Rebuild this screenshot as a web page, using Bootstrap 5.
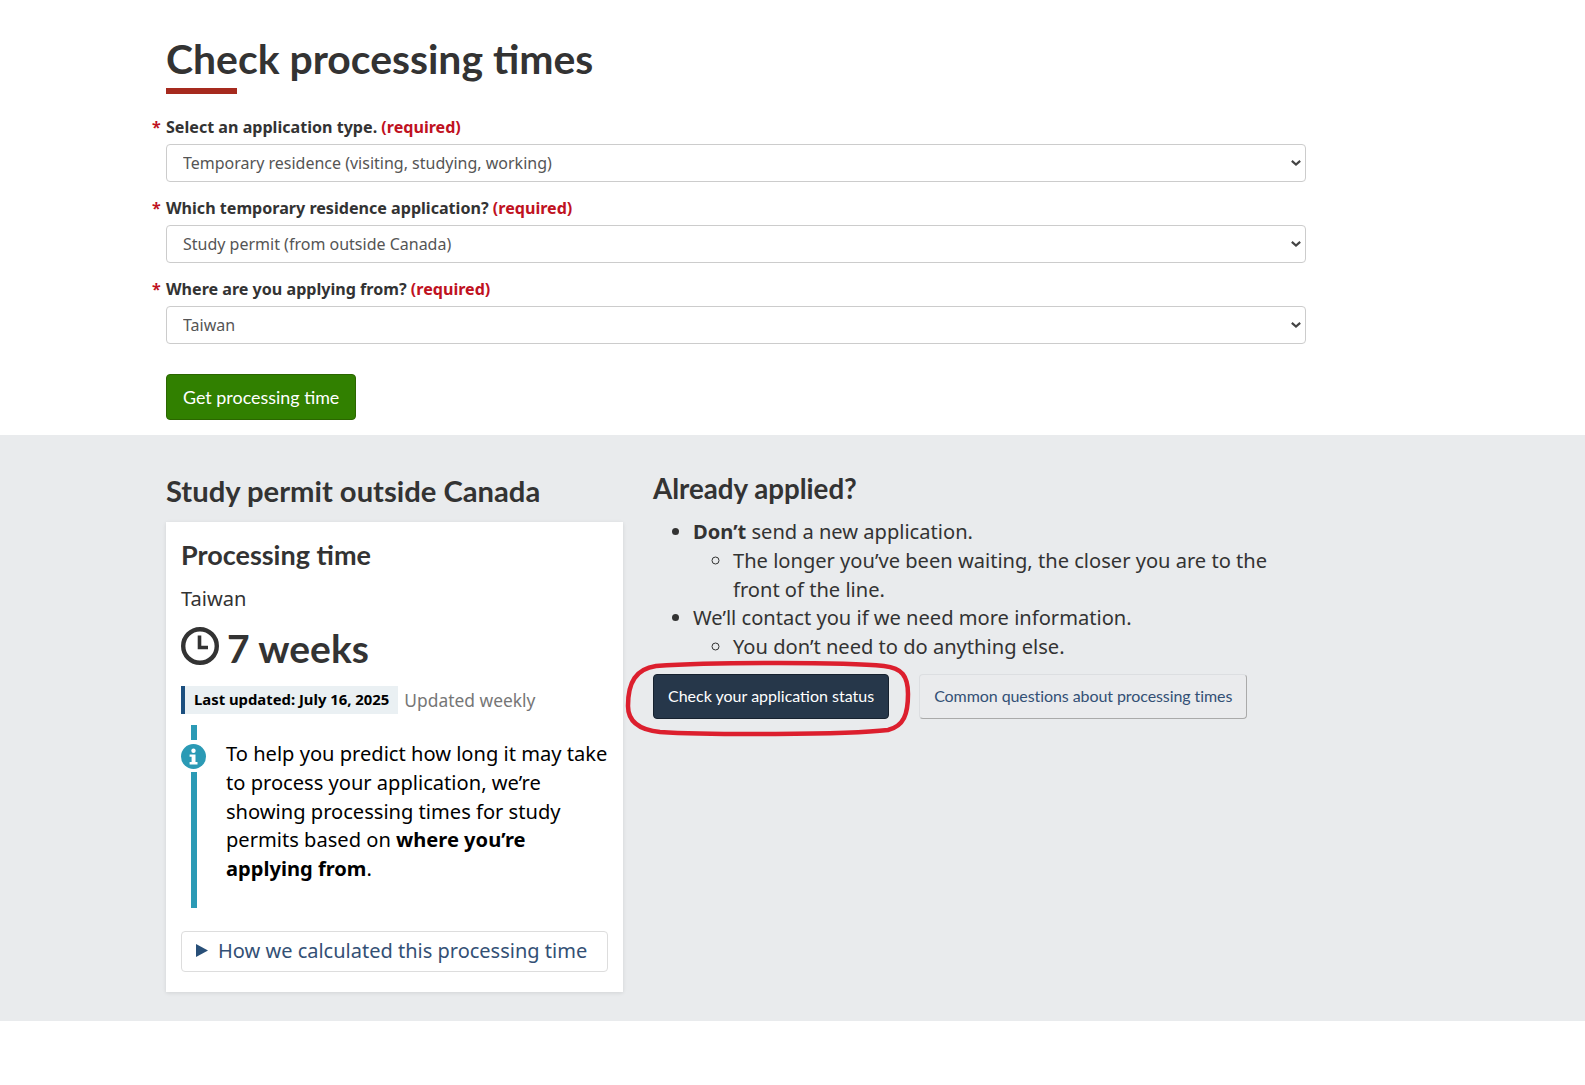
<!doctype html>
<html lang="en">
<head>
<meta charset="utf-8">
<title>Check processing times</title>
<link rel="stylesheet" href="https://cdn.jsdelivr.net/npm/bootstrap@5.3.0/dist/css/bootstrap.min.css">
<style>
body{font-family:"Noto Sans",sans-serif;font-size:20.1px;line-height:28.75px;color:#333;background:#fff;min-height:1085px}
.page-wrap{padding-left:166px;width:1140px;box-sizing:content-box}
.top-area{padding-top:34px;height:435px}
.main-title{font-family:Lato,sans-serif;font-weight:700;font-size:40.9px;line-height:50px;color:#333;margin:0;height:59px;position:relative}
.main-title::after{content:"";position:absolute;left:0;bottom:-1px;width:71px;height:6px;background:#a62a1e}
.q-block{margin-bottom:0;height:81px}
.q-label{display:block;position:relative;font-size:16.1px;font-weight:700;line-height:22px;color:#333;margin:0 0 6px}
.q-label::before{content:"*";position:absolute;left:-14px;color:#c0121f}
.req{color:#c0121f}
.q-select{height:38px;font-family:"Noto Sans",sans-serif;font-size:16px;line-height:22px;color:#555;padding:6px 30px 6px 16px;border:1px solid #ccc;border-radius:4px;background-image:url("data:image/svg+xml,%3csvg xmlns='http://www.w3.org/2000/svg' viewBox='0 0 12 8'%3e%3cpath fill='none' stroke='%23444' stroke-width='2.6' d='M1 1.5l5 4.5 5-4.5'/%3e%3c/svg%3e");background-size:10px 8px;background-position:right 4px center}
.first-q{margin-top:23px}
.go-btn{font-family:Lato,sans-serif;font-size:17.9px;line-height:24px;color:#fff;background:#318000;border:1px solid #2b6600;border-radius:4px;padding:10px 16px;height:46px;margin-top:15px}
.go-btn:hover{color:#fff;background:#318000}
.grey-band{background:#e9ebed;height:586px;padding-top:35px}
.cols{display:flex;gap:30px}
.left-col{width:457px;flex:none}
.right-col{flex:1;min-width:0;padding-top:1px}
.sub-head{font-family:Lato,sans-serif;font-weight:700;font-size:29.2px;line-height:36px;color:#333;margin:0}
.left-head{margin:3px 0 13px}
.time-card{background:#fff;height:470px;padding:15px;box-shadow:0 1px 4px rgba(0,0,0,.1)}
.time-head{font-family:Lato,sans-serif;font-weight:700;font-size:27px;line-height:34px;margin:1px 0 12px;color:#333}
.place{line-height:29px;margin-bottom:13px}
.time-row{display:flex;align-items:center;gap:8px;height:44px;font-family:Lato,sans-serif;font-weight:700;font-size:39px;line-height:44px;color:#333}
.time-row svg{width:38px;height:38px;flex:none;margin-top:-4px}
.update-row{display:flex;align-items:center;gap:6px;margin-top:16px;height:28px}
.update-tag{background:#eaf0f3;border-left:4px solid #1c4f7f;font-size:14.85px;font-weight:700;color:#000;height:28px;line-height:27px;padding:0 9px 0 9px;white-space:nowrap}
.update-note{font-size:17.4px;color:#767676;line-height:26px}
.info-box{display:flex;gap:20px;margin-top:11px;height:183px}
.info-rail{width:25px;flex:none;display:flex;flex-direction:column;align-items:center}
.rail-top{width:6px;height:15px;background:#2b9ab5;margin-left:1px}
.rail-bottom{width:6px;flex:1;background:#2b9ab5;margin-left:1px}
.info-rail svg{width:25px;height:25px;margin:4px 0 3px;flex:none}
.info-text{color:#000;margin:15px 0 0;width:385px}
.calc-box{margin-top:23px;height:41px;border:1px solid #ddd;border-radius:4px;padding:0 14px 2px;color:#335075;font-size:20px;line-height:37px;white-space:nowrap;display:flex;align-items:center;gap:10px}
.calc-box svg{width:12px;height:13px;flex:none}
.right-col .sub-head{font-size:27.7px;line-height:36px;margin-bottom:11px}
.app-list{margin:0;padding-left:40px;list-style:disc}
.app-list ul{margin:0;padding-left:40px;list-style:circle}
.btn-row{display:flex;gap:30px;margin-top:12px;align-items:center}
.ring-wrap{position:relative}
.ring-wrap svg{position:absolute;left:-27px;top:-12px;width:284px;height:74px;pointer-events:none;overflow:visible}
.status-btn{font-family:Lato,sans-serif;font-size:16px;line-height:22px;color:#fff;background:#26374a;border:1px solid #16212e;border-radius:4px;height:45px;padding:10px 14px;white-space:nowrap;display:block}
.status-btn:hover{color:#fff;background:#26374a}
.faq-btn{font-family:Lato,sans-serif;font-size:16px;line-height:22px;color:#335075;background:#eaebed;border:1px solid #dcdee1;border-bottom-color:#aaa;border-right-color:#aaa;border-radius:4px;height:45px;padding:10px 14px;letter-spacing:-.08px;white-space:nowrap}
.faq-btn:hover{color:#335075;background:#eaebed}
</style>
</head>
<body>
<div class="top-area">
  <div class="page-wrap">
    <h1 class="main-title">Check processing times</h1>
    <form>
      <div class="q-block first-q">
        <label class="q-label" for="q1">Select an application type. <span class="req">(required)</span></label>
        <select class="form-select q-select" id="q1"><option>Temporary residence (visiting, studying, working)</option></select>
      </div>
      <div class="q-block">
        <label class="q-label" for="q2">Which temporary residence application? <span class="req">(required)</span></label>
        <select class="form-select q-select" id="q2"><option>Study permit (from outside Canada)</option></select>
      </div>
      <div class="q-block">
        <label class="q-label" for="q3">Where are you applying from? <span class="req">(required)</span></label>
        <select class="form-select q-select" id="q3"><option>Taiwan</option></select>
      </div>
      <button type="button" class="btn go-btn">Get processing time</button>
    </form>
  </div>
</div>
<div class="grey-band">
  <div class="page-wrap">
    <div class="cols">
      <div class="left-col">
        <h2 class="sub-head left-head">Study permit outside Canada</h2>
        <div class="time-card">
          <h3 class="time-head">Processing time</h3>
          <div class="place">Taiwan</div>
          <div class="time-row">
            <svg viewBox="0 0 38 38" fill="none" stroke="#333" aria-hidden="true"><circle cx="19" cy="19" r="16.8" stroke-width="4.4"/><path d="M18.5 8.5V20.5H27" stroke-width="3.6"/></svg>
            <span>7 weeks</span>
          </div>
          <div class="update-row">
            <span class="update-tag">Last updated: July 16, 2025</span>
            <span class="update-note">Updated weekly</span>
          </div>
          <div class="info-box">
            <div class="info-rail">
              <div class="rail-top"></div>
              <svg viewBox="0 0 25 25" aria-hidden="true"><circle cx="12.5" cy="12.5" r="12.5" fill="#2b9ab5"/><circle cx="12.5" cy="6.8" r="2.2" fill="#fff"/><path d="M8.6 10.4h5.9v7.6h2v2.4H8.6V18h2v-5.2h-2z" fill="#fff"/></svg>
              <div class="rail-bottom"></div>
            </div>
            <p class="info-text">To help you predict how long it may take to process your application, we’re showing processing times for study permits based on <strong>where you’re applying from</strong>.</p>
          </div>
          <div class="calc-box">
            <svg viewBox="0 0 12 13" aria-hidden="true"><path d="M0 0L12 6.5L0 13z" fill="#284f78"/></svg>
            <span>How we calculated this processing time</span>
          </div>
        </div>
      </div>
      <div class="right-col">
        <h2 class="sub-head">Already applied?</h2>
        <ul class="app-list">
          <li><strong>Don’t</strong> send a new application.
            <ul><li>The longer you’ve been waiting, the closer you are to the front of the line.</li></ul>
          </li>
          <li>We’ll contact you if we need more information.
            <ul><li>You don’t need to do anything else.</li></ul>
          </li>
        </ul>
        <div class="btn-row">
          <div class="ring-wrap">
            <a href="#" class="btn status-btn">Check your application status</a>
            <svg viewBox="0 0 284 74" fill="none" aria-hidden="true"><path d="M30 4C90 0 220 0 258 4C276 6 282 14 282 32C282 52 278 64 262 68C220 73 80 73 34 70C14 68 2 60 2 44C2 20 10 7 30 4Z" stroke="#dc1f2e" stroke-width="4.5"/></svg>
          </div>
          <a href="#" class="btn faq-btn">Common questions about processing times</a>
        </div>
      </div>
    </div>
  </div>
</div>
<script src="https://cdn.jsdelivr.net/npm/bootstrap@5.3.0/dist/js/bootstrap.bundle.min.js"></script>
</body>
</html>
